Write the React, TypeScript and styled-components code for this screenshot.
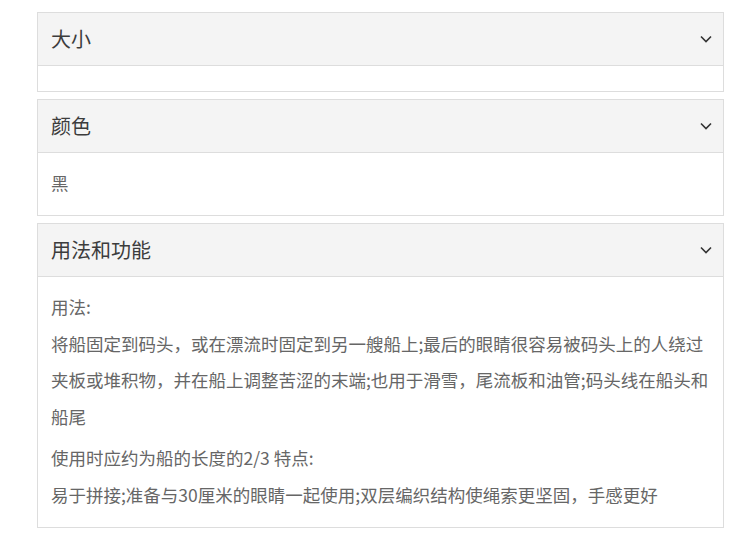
import { useState } from "react";
import styled, { createGlobalStyle } from "styled-components";

const GlobalStyle = createGlobalStyle`
  body {
    margin: 0;
    background: #fff;
    font-family: "Noto Sans CJK SC", "Noto Sans", sans-serif;
  }
`;

const Page = styled.div`
  width: 687px;
  padding: 12px 0 16px 37px;
`;

const Panel = styled.section`
  border: 1px solid #dddddd;
  background: #fff;
  margin-bottom: 7px;
`;

const PanelHeader = styled.button`
  all: unset;
  box-sizing: border-box;
  width: 100%;
  height: 53px;
  padding: 0 11px 0 13px;
  display: flex;
  align-items: center;
  justify-content: space-between;
  background: #f4f4f4;
  border-bottom: 1px solid #dddddd;
  cursor: pointer;
`;

const Title = styled.span`
  font-size: 20px;
  color: #3c3c3c;
  line-height: 1;
`;

const Chevron = styled.svg<{ $open: boolean }>`
  width: 12px;
  height: 8px;
  transform: ${(p) => (p.$open ? "none" : "rotate(180deg)")};
`;

const PanelBody = styled.div`
  padding: 12px 8px 13px 13px;
  font-size: 17.5px;
  color: #666;
`;

const Para = styled.p`
  margin: 0;
  line-height: 36.8px;
  & + & {
    margin-top: 4px;
  }
`;

interface Section {
  title: string;
  paragraphs: string[][];
}

const sections: Section[] = [
  { title: "大小", paragraphs: [] },
  { title: "颜色", paragraphs: [["黑"]] },
  {
    title: "用法和功能",
    paragraphs: [
      [
        "用法:",
        "将船固定到码头，或在漂流时固定到另一艘船上;最后的眼睛很容易被码头上的人绕过夹板或堆积物，并在船上调整苦涩的末端;也用于滑雪，尾流板和油管;码头线在船头和船尾",
      ],
      [
        "使用时应约为船的长度的2/3 特点:",
        "易于拼接;准备与30厘米的眼睛一起使用;双层编织结构使绳索更坚固，手感更好",
      ],
    ],
  },
];

const AccordionItem = ({ section }: { section: Section }) => {
  const [open, setOpen] = useState(true);
  return (
    <Panel>
      <PanelHeader onClick={() => setOpen(!open)}>
        <Title>{section.title}</Title>
        <Chevron $open={open} viewBox="0 0 12 8">
          <polyline
            points="1,1.5 6,6.5 11,1.5"
            fill="none"
            stroke="#333"
            strokeWidth="1.6"
          />
        </Chevron>
      </PanelHeader>
      {open && (
        <PanelBody>
          {section.paragraphs.map((lines, i) => (
            <Para key={i}>
              {lines.map((line, j) => (
                <span key={j}>
                  {j > 0 && <br />}
                  {line}
                </span>
              ))}
            </Para>
          ))}
        </PanelBody>
      )}
    </Panel>
  );
};

export default function App() {
  return (
    <>
      <GlobalStyle />
      <Page>
        {sections.map((s) => (
          <AccordionItem key={s.title} section={s} />
        ))}
      </Page>
    </>
  );
}
